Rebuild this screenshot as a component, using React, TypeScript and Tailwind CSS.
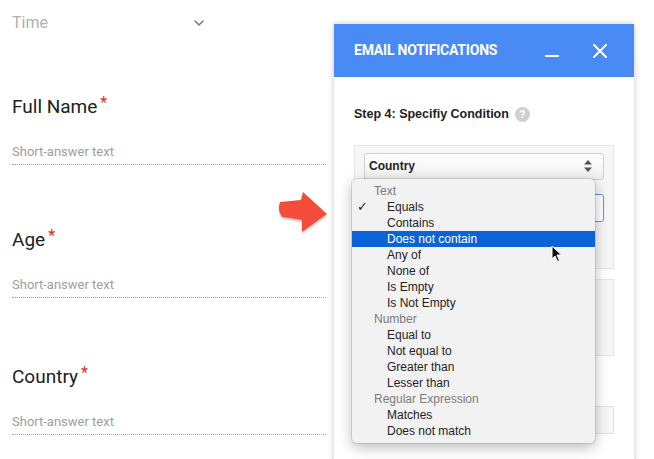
import { ChevronDown } from 'lucide-react'

type Row = { label: string; group?: boolean; checked?: boolean; active?: boolean }

const rows: Row[] = [
  { label: 'Text', group: true },
  { label: 'Equals', checked: true },
  { label: 'Contains' },
  { label: 'Does not contain', active: true },
  { label: 'Any of' },
  { label: 'None of' },
  { label: 'Is Empty' },
  { label: 'Is Not Empty' },
  { label: 'Number', group: true },
  { label: 'Equal to' },
  { label: 'Not equal to' },
  { label: 'Greater than' },
  { label: 'Lesser than' },
  { label: 'Regular Expression', group: true },
  { label: 'Matches' },
  { label: 'Does not match' },
]

function Question({ label, gap }: { label: string; gap: string }) {
  return (
    <div className={gap}>
      <div className="h-7 text-[19px] leading-7 text-[#202124]">
        {label}
        <span className="ml-[3px] align-top text-[16px] leading-5 text-[#d93025]">*</span>
      </div>
      <div className="mt-[21px] h-5 text-[13px] leading-5 text-[#9e9e9e]">Short-answer text</div>
      <div className="mt-[2px] border-b border-dotted border-[#9e9e9e]" />
    </div>
  )
}

function ConditionMenu() {
  return (
    <div className="absolute left-[352px] top-[179px] w-[243px] rounded-[5px] bg-[#f2f2f2] py-1 font-['Liberation_Sans',Arial,sans-serif] text-[12px] shadow-[0_4px_14px_rgba(0,0,0,0.28)] ring-1 ring-black/10">
      {rows.map((r) => (
        <div
          key={r.label}
          className={
            'relative flex h-4 items-center leading-4 ' +
            (r.group ? 'pl-[22px] text-[#7b7b7b]' : 'pl-[35px] text-[#222]') +
            (r.active ? ' bg-[#0b63d8] text-white' : '')
          }
        >
          {r.checked && <span className="absolute left-[5px] text-[13px] text-[#222]">✓</span>}
          {r.label}
        </div>
      ))}
    </div>
  )
}

export default function App() {
  return (
    <div className="relative flex h-[459px] w-[654px] overflow-hidden bg-white font-['Roboto',sans-serif]">
      <div className="w-[326px] shrink-0 pl-3">
        <div className="mt-[11px] flex h-6 w-[195px] items-center justify-between text-[16px] text-[#b0b0b0]">
          <span>Time</span>
          <ChevronDown className="h-4 w-4 text-[#757575]" strokeWidth={2.2} />
        </div>
        <Question label="Full Name" gap="mt-[58px]" />
        <Question label="Age" gap="mt-[61px]" />
        <Question label="Country" gap="mt-[65px]" />
      </div>

      <div className="pl-2 pt-6">
        <div className="h-[440px] w-[300px] bg-white shadow-[0_0_6px_rgba(0,0,0,0.22)]">
          <div className="flex h-[53px] items-center bg-[#4a8af4] pl-5 pr-[27px] text-white">
            <span className="text-[14px] font-bold tracking-[-0.2px]">EMAIL NOTIFICATIONS</span>
            <span className="ml-auto mt-[11px] h-[2px] w-[14px] bg-white" />
            <svg className="ml-[34px]" width="14" height="14" viewBox="0 0 14 14">
              <path d="M1 1 L13 13 M13 1 L1 13" stroke="#fff" strokeWidth="2" strokeLinecap="square" />
            </svg>
          </div>

          <div className="px-5 pt-[28px] font-['Liberation_Sans',Arial,sans-serif]">
            <div className="flex items-center text-[12.5px] font-bold text-[#222]">
              Step 4: Specifiy Condition
              <span className="ml-[6px] flex h-[15px] w-[15px] items-center justify-center rounded-full bg-[#cfcfcf] text-[11px] text-white">?</span>
            </div>

            <div className="mt-[21px] h-[124px] border border-[#e4e4e4] bg-[#f6f6f6] px-[9px] pt-[7px]">
              <div className="flex h-[27px] items-center justify-between rounded-[3px] border border-[#cfcfcf] bg-gradient-to-b from-white to-[#efefef] pl-[4px] pr-[11px] text-[12px] font-bold text-[#222]">
                Country
                <svg width="8" height="12" viewBox="0 0 8 12">
                  <path d="M4 0 L8 4.5 H0 Z M4 12 L8 7.5 H0 Z" fill="#555" />
                </svg>
              </div>
              <div className="mt-[14px] h-[28px] rounded-[3px] border border-[#5d97e6] bg-white" />
            </div>

            <div className="mt-[10px] h-[77px] border border-[#e4e4e4] bg-[#f6f6f6]" />
            <div className="mt-[50px] h-[28px] rounded-[2px] border border-[#e0e0e0] bg-[#f6f6f6]" />
          </div>
        </div>
      </div>

      <svg className="absolute left-[270px] top-[185px]" width="64" height="56" viewBox="0 0 64 56">
        <defs>
          <filter id="sh" x="-20%" y="-20%" width="140%" height="150%">
            <feDropShadow dx="0" dy="2" stdDeviation="1.2" floodColor="#000" floodOpacity="0.22" />
          </filter>
        </defs>
        <path
          d="M10 17 L31 15 L33 7 L57 29 L32 47 L32 35 L12 32 Q7 25 10 17 Z"
          fill="#f44e3b"
          filter="url(#sh)"
        />
      </svg>

      <ConditionMenu />

      <svg className="absolute left-[551px] top-[245px]" width="12" height="18" viewBox="0 0 12 18">
        <path d="M1 1 L1 14 L4 11 L6.5 16.5 L8.5 15.5 L6 10 L10.5 10 Z" fill="#111" stroke="#fff" strokeWidth="1" />
      </svg>
    </div>
  )
}
